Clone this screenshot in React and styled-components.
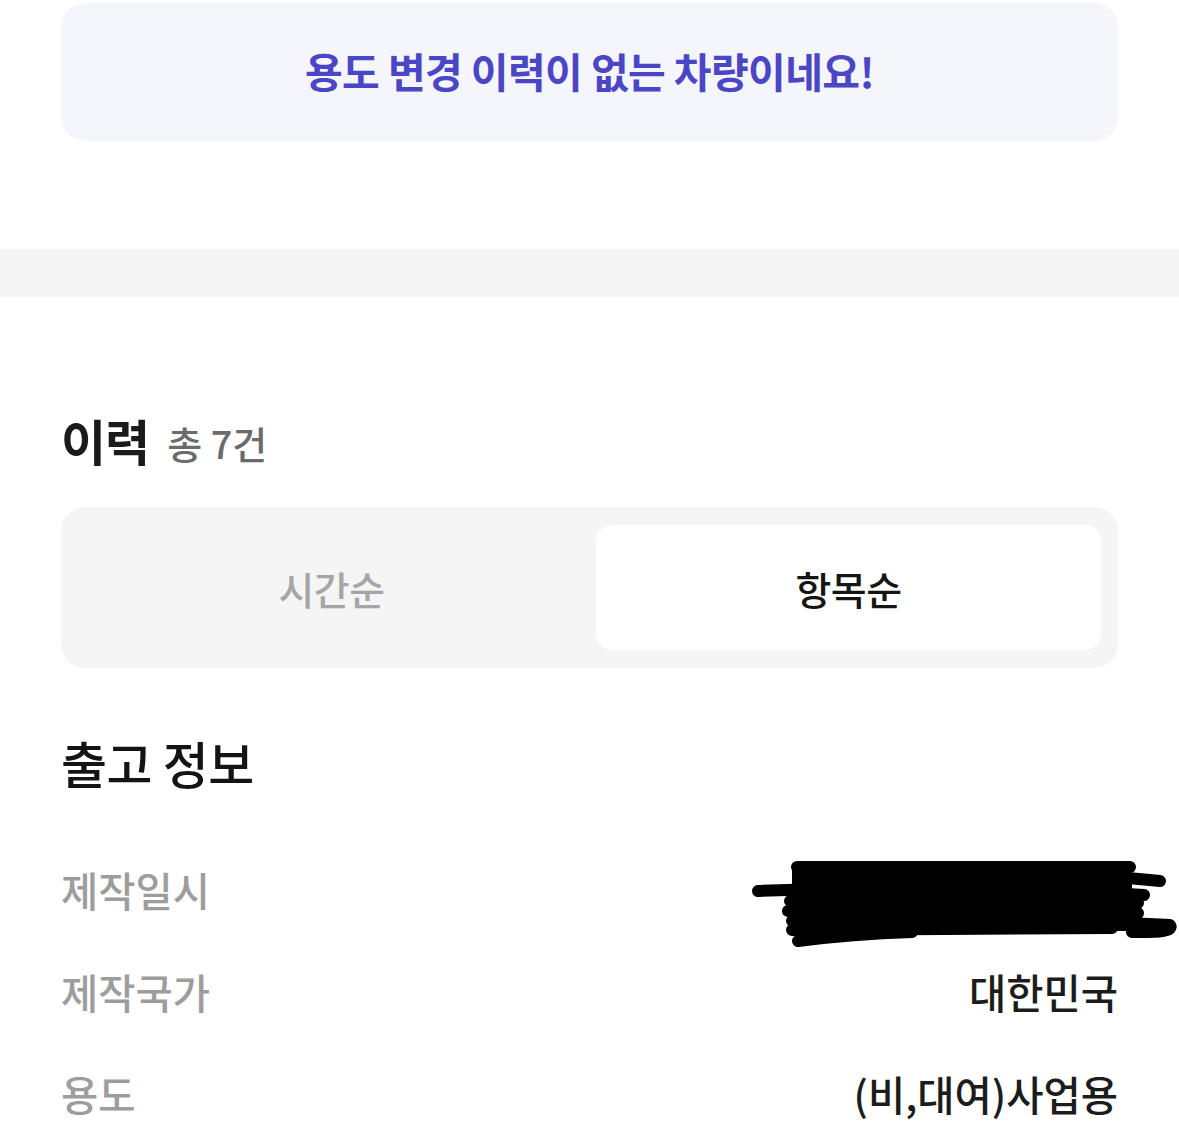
import React from 'react';
import styled, { createGlobalStyle } from 'styled-components';

const GlobalStyle = createGlobalStyle`
  html, body {
    margin: 0;
    padding: 0;
    background: #ffffff;
    font-family: "Noto Sans CJK KR", "Noto Sans", sans-serif;
    -webkit-font-smoothing: antialiased;
  }
`;

const Page = styled.div`
  width: 1179px;
  overflow: hidden;
`;

const Inner = styled.div`
  padding: 0 61px;
`;

const Banner = styled.div`
  margin-top: 3px;
  height: 138px;
  box-sizing: border-box;
  padding-bottom: 5px;
  border-radius: 24px;
  background: #f5f5fc;
  display: flex;
  align-items: center;
  justify-content: center;
  color: #4a46c6;
  font-size: 41px;
  font-weight: 700;
  letter-spacing: -0.6px;
`;

const Band = styled.div`
  margin-top: 108px;
  height: 48px;
  background: #f5f5f5;
`;

const TitleRow = styled.div`
  margin-top: 110px;
  height: 64px;
  display: flex;
  align-items: center;
  gap: 18px;
`;

const Title = styled.span`
  font-size: 49px;
  font-weight: 700;
  color: #1a1a1a;
  letter-spacing: -1px;
`;

const Count = styled.span`
  font-size: 38px;
  font-weight: 500;
  color: #6b6b6b;
  padding-top: 6px;
`;

const Segment = styled.div`
  margin-top: 36px;
  height: 161px;
  box-sizing: border-box;
  padding: 18px 17px 18px 18px;
  border-radius: 24px;
  background: #f5f5f5;
  display: grid;
  grid-template-columns: 505px 505px;
  justify-content: space-between;
`;

const SegmentButton = styled.div`
  display: flex;
  align-items: center;
  justify-content: center;
  border-radius: 16px;
  font-size: 39px;
  font-weight: 500;
  letter-spacing: -0.5px;
  background: ${(p) => (p.$active ? '#ffffff' : 'transparent')};
  color: ${(p) => (p.$active ? '#151515' : '#a6a6a6')};
`;

const SectionHeading = styled.div`
  margin-top: 62px;
  height: 64px;
  display: flex;
  align-items: center;
  font-size: 50px;
  font-weight: 500;
  color: #141414;
  letter-spacing: -0.5px;
`;

const InfoList = styled.div`
  margin-top: 44px;
  display: flex;
  flex-direction: column;
`;

const InfoRow = styled.div`
  height: 102px;
  display: flex;
  align-items: center;
  justify-content: space-between;
  font-size: 40.5px;
`;

const Label = styled.span`
  color: #9d9d9d;
  font-weight: 500;
`;

const Value = styled.span`
  color: #1c1c1c;
  font-weight: 500;
`;

const Redaction = styled.svg`
  margin-right: -61px;
  margin-top: 24px;
  display: block;
`;

const Scribble = () => (
  <Redaction width="427" height="92" viewBox="0 0 427 92">
    <g fill="none" stroke="#000" strokeWidth="12" strokeLinecap="round" strokeLinejoin="round">
      <path d="M45 12 L378 12" />
      <path d="M220 15 Q330 18 408 26" />
      <path d="M6 36 Q200 28 392 40" />
      <path d="M38 46 L386 48" />
      <path d="M36 56 Q200 52 386 58" />
      <path d="M40 66 Q250 62 418 70 Q424 78 380 77" />
      <path d="M40 75 L360 73" />
      <path d="M46 86 Q100 79 160 77" />
    </g>
    <rect x="40" y="14" width="340" height="62" fill="#000" />
  </Redaction>
);

const rows = [
  { label: '제작일시', value: null },
  { label: '제작국가', value: '대한민국' },
  { label: '용도', value: '(비,대여)사업용' },
];

const App = () => {
  return (
    <Page>
      <GlobalStyle />
      <Inner>
        <Banner>용도 변경 이력이 없는 차량이네요!</Banner>
      </Inner>
      <Band />
      <Inner>
        <TitleRow>
          <Title>이력</Title>
          <Count>총 7건</Count>
        </TitleRow>
        <Segment>
          <SegmentButton>시간순</SegmentButton>
          <SegmentButton $active>항목순</SegmentButton>
        </Segment>
        <SectionHeading>출고 정보</SectionHeading>
        <InfoList>
          {rows.map((r) => (
            <InfoRow key={r.label}>
              <Label>{r.label}</Label>
              {r.value ? <Value>{r.value}</Value> : <Scribble />}
            </InfoRow>
          ))}
        </InfoList>
      </Inner>
    </Page>
  );
};

export default App;
